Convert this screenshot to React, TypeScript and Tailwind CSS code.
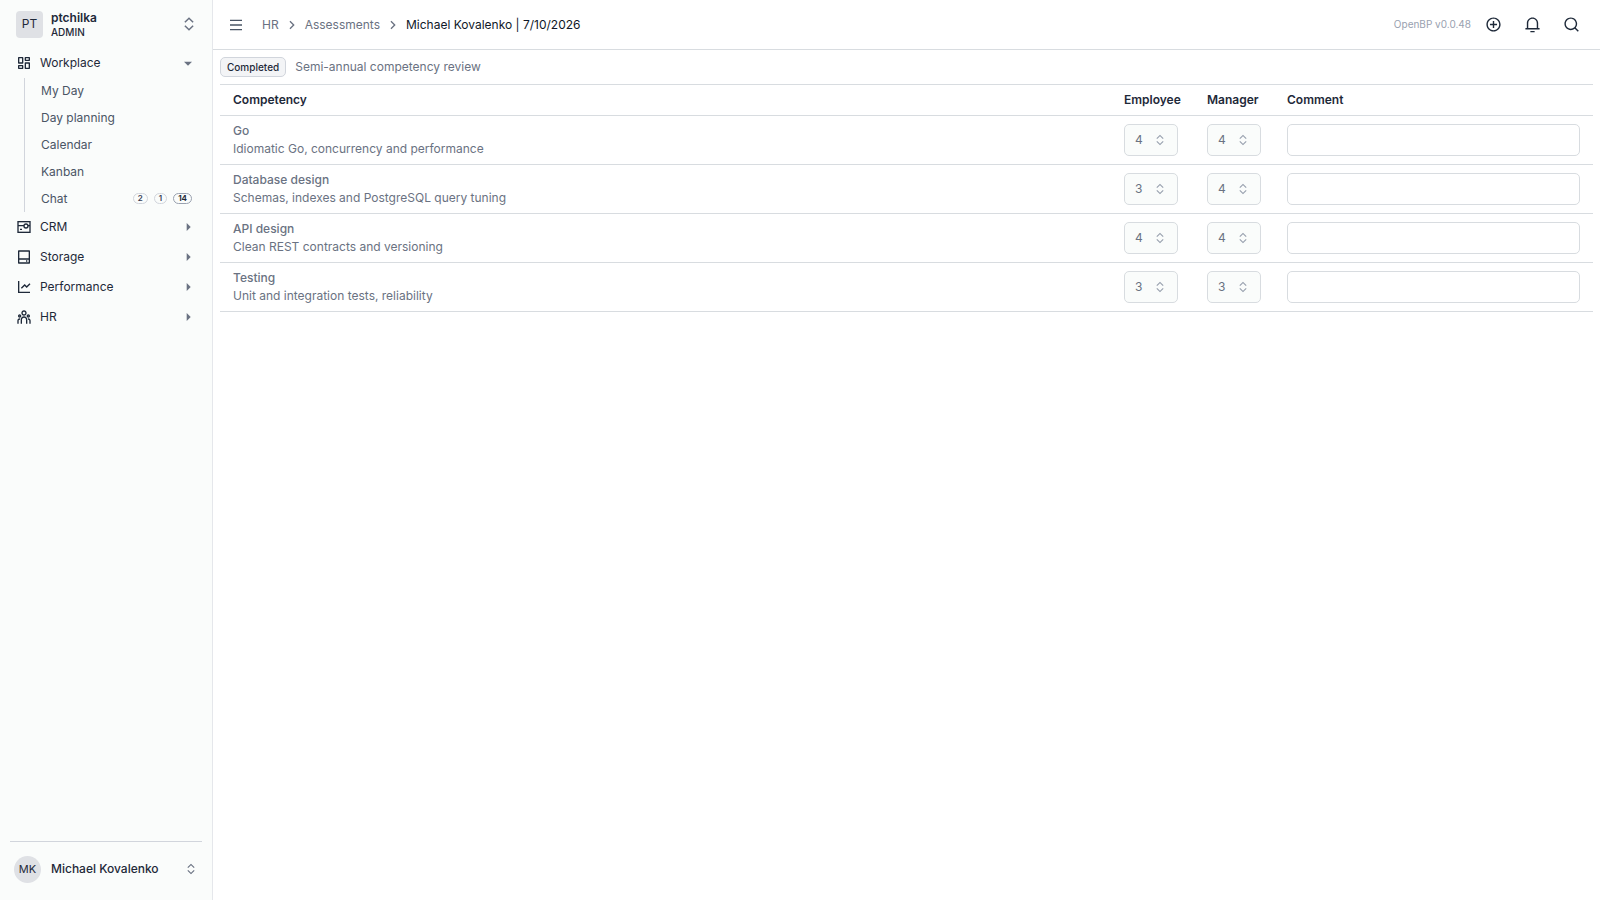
import type { ReactNode } from 'react'
import {
  RiAddCircleLine,
  RiArrowDownSFill,
  RiArrowRightSFill,
  RiArrowRightSLine,
  RiDashboardLine,
  RiExpandUpDownLine,
  RiHardDrive2Line,
  RiLineChartLine,
  RiMenuLine,
  RiNotification3Line,
  RiSearchLine,
  RiTeamLine,
} from 'react-icons/ri'

const workplaceLinks = ['My Day', 'Day planning', 'Calendar', 'Kanban']

const competencies = [
  { name: 'Go', description: 'Idiomatic Go, concurrency and performance', employee: 4, manager: 4 },
  { name: 'Database design', description: 'Schemas, indexes and PostgreSQL query tuning', employee: 3, manager: 4 },
  { name: 'API design', description: 'Clean REST contracts and versioning', employee: 4, manager: 4 },
  { name: 'Testing', description: 'Unit and integration tests, reliability', employee: 3, manager: 3 },
]

function CrmIcon() {
  return (
    <svg viewBox="0 0 24 24" className="size-4" fill="none" stroke="currentColor" strokeWidth="2" aria-hidden="true">
      <rect x="3" y="4" width="18" height="16" />
      <path d="M3 10h9M18 10h3M6 15.5h3" />
      <circle cx="15" cy="10.5" r="3" />
    </svg>
  )
}

function NavGroup({ icon, label, open = false }: { icon: ReactNode; label: string; open?: boolean }) {
  return (
    <button
      type="button"
      aria-expanded={open}
      className="flex h-[30px] w-full items-center gap-2 px-4 text-left text-xs text-gray-800"
    >
      {icon}
      <span className="flex-1">{label}</span>
      {open ? (
        <RiArrowDownSFill className="size-4 text-gray-500" />
      ) : (
        <RiArrowRightSFill className="size-4 text-gray-500" />
      )}
    </button>
  )
}

function Sidebar() {
  return (
    <aside className="flex w-[213px] shrink-0 flex-col border-r border-gray-200 bg-[#fafcfb]">
      <button type="button" className="flex h-12 w-full items-center gap-2 pr-[14px] pl-4 text-left">
        <span className="flex size-[27px] items-center justify-center rounded bg-[#dfe1e5] text-xs text-gray-800">
          PT
        </span>
        <span className="flex flex-1 flex-col text-gray-800">
          <span className="text-xs leading-4 font-semibold">ptchilka</span>
          <span className="text-[10px] leading-3 font-medium">ADMIN</span>
        </span>
        <RiExpandUpDownLine className="size-[18px] text-gray-500" />
      </button>

      <nav className="flex-1">
        <NavGroup icon={<RiDashboardLine className="size-4" />} label="Workplace" open />
        <ul className="ml-6 grid h-[134px] auto-rows-fr border-l border-gray-300 text-xs text-gray-600">
          {workplaceLinks.map((label) => (
            <li key={label} className="flex">
              <a href="#" className="flex flex-1 items-center pl-4">
                {label}
              </a>
            </li>
          ))}
          <li className="flex">
            <a href="#" className="flex flex-1 items-center gap-[6px] pr-5 pl-4">
              <span className="flex-1">Chat</span>
              <CountBadge value={2} />
              <CountBadge value={1} />
              <CountBadge value={14} strong />
            </a>
          </li>
        </ul>
        <NavGroup icon={<CrmIcon />} label="CRM" />
        <NavGroup icon={<RiHardDrive2Line className="size-4" />} label="Storage" />
        <NavGroup icon={<RiLineChartLine className="size-4" />} label="Performance" />
        <NavGroup icon={<RiTeamLine className="size-4" />} label="HR" />
      </nav>

      <div className="mx-[10px] border-t border-gray-300">
        <button type="button" className="flex h-[58px] w-full items-center gap-[10px] px-1 pb-1 text-left">
          <span className="flex size-[27px] items-center justify-center rounded-full bg-[#dfe1e5] text-[11px] text-gray-800">
            MK
          </span>
          <span className="flex-1 text-xs font-medium text-gray-800">Michael Kovalenko</span>
          <RiExpandUpDownLine className="size-[14px] text-gray-500" />
        </button>
      </div>
    </aside>
  )
}

function CountBadge({ value, strong = false }: { value: number; strong?: boolean }) {
  return (
    <span
      className={
        strong
          ? 'flex h-[11px] items-center rounded-full border border-gray-400 px-1 text-[8px] font-bold text-gray-800'
          : 'flex h-[11px] items-center rounded-full border border-gray-300 px-1 text-[8px] font-semibold text-gray-700'
      }
    >
      {value}
    </span>
  )
}

function Header() {
  return (
    <header className="flex h-[50px] items-center justify-between border-b border-[#d8dce0] pr-5 pl-[15px]">
      <div className="flex items-center gap-[18px]">
        <button type="button" aria-label="Toggle sidebar">
          <RiMenuLine className="size-4 text-gray-600" />
        </button>
        <nav aria-label="Breadcrumb" className="flex items-center gap-[5px] text-xs text-gray-500">
          <a href="#">HR</a>
          <RiArrowRightSLine className="size-4" />
          <a href="#">Assessments</a>
          <RiArrowRightSLine className="size-4" />
          <span className="text-gray-900">Michael Kovalenko | 7/10/2026</span>
        </nav>
      </div>
      <div className="flex items-center gap-[22px] text-gray-800">
        <div className="flex items-center gap-[14px]">
          <span className="text-[10px] text-gray-400">OpenBP v0.0.48</span>
          <button type="button" aria-label="Add">
            <RiAddCircleLine className="size-[17px]" />
          </button>
        </div>
        <button type="button" aria-label="Notifications">
          <RiNotification3Line className="size-[17px]" />
        </button>
        <button type="button" aria-label="Search">
          <RiSearchLine className="size-[17px]" />
        </button>
      </div>
    </header>
  )
}

function ScoreSelect({ value, label }: { value: number; label: string }) {
  return (
    <div className="relative w-[54px]">
      <select
        aria-label={label}
        defaultValue={value}
        disabled
        className="block h-8 w-full appearance-none rounded-[5px] border border-[#d8dce0] bg-[#fafcfb] pl-[10px] text-xs text-gray-500 opacity-100"
      >
        {[1, 2, 3, 4, 5].map((score) => (
          <option key={score}>{score}</option>
        ))}
      </select>
      <RiExpandUpDownLine className="pointer-events-none absolute top-[9px] right-[11px] size-[14px] text-gray-400" />
    </div>
  )
}

function CompetencyTable() {
  return (
    <table className="w-full table-fixed border-collapse border-t border-[#d8dce0] text-left text-xs">
      <thead>
        <tr className="h-[31px] border-b border-[#d8dce0] text-gray-800">
          <th className="px-[13px] font-semibold">Competency</th>
          <th className="w-[83px] pl-[13px] font-semibold">Employee</th>
          <th className="w-[80px] pl-[13px] font-semibold">Manager</th>
          <th className="w-[319px] px-[13px] font-semibold">Comment</th>
        </tr>
      </thead>
      <tbody>
        {competencies.map((item) => (
          <tr key={item.name} className="h-[49px] border-b border-[#d8dce0]">
            <td className="px-[13px] leading-[18px] text-gray-500">
              <div className="font-medium">{item.name}</div>
              <div>{item.description}</div>
            </td>
            <td className="pl-[13px]">
              <ScoreSelect value={item.employee} label={`${item.name} employee score`} />
            </td>
            <td className="pl-[13px]">
              <ScoreSelect value={item.manager} label={`${item.name} manager score`} />
            </td>
            <td className="px-[13px]">
              <input
                type="text"
                aria-label={`${item.name} comment`}
                className="block h-8 w-full rounded-[5px] border border-[#d8dce0] px-2"
              />
            </td>
          </tr>
        ))}
      </tbody>
    </table>
  )
}

export default function App() {
  return (
    <div className="flex min-h-screen bg-white font-['Inter',sans-serif]">
      <Sidebar />
      <main className="min-w-0 flex-1">
        <Header />
        <div className="px-[7px]">
          <div className="flex h-[34px] items-center gap-[9px]">
            <span className="flex h-5 items-center rounded-[5px] border border-gray-300 bg-gray-100 px-[6px] text-[10px] font-medium text-gray-800">
              Completed
            </span>
            <span className="text-xs text-gray-500">Semi-annual competency review</span>
          </div>
          <CompetencyTable />
        </div>
      </main>
    </div>
  )
}
